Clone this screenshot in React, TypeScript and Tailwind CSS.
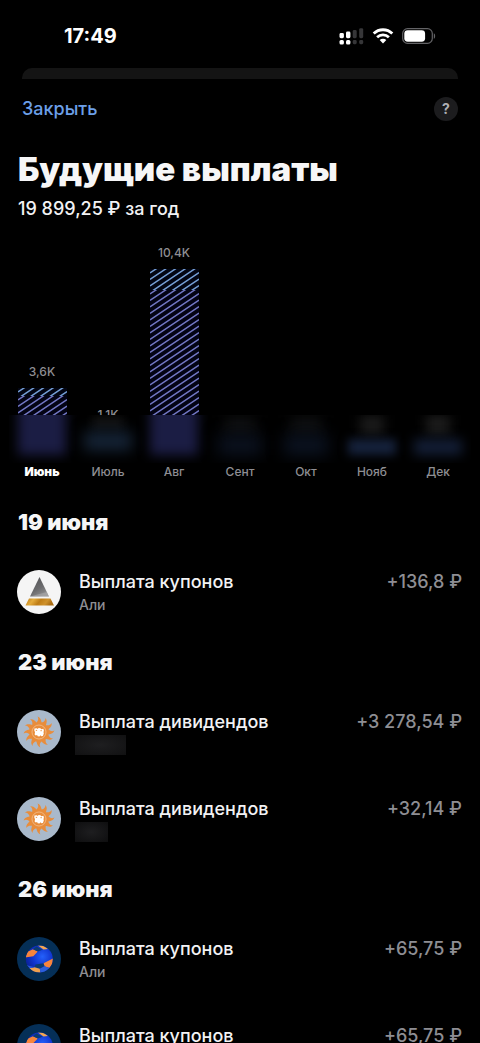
import React from "react";

type Logo = "almaz" | "sun" | "ball";

type Payout = {
  title: string;
  note?: string;
  hiddenNote?: "wide" | "narrow";
  amount: string;
  logo: Logo;
};

type Day = { date: string; payouts: Payout[] };

const days: Day[] = [
  {
    date: "19 июня",
    payouts: [{ title: "Выплата купонов", note: "Али", amount: "+136,8 ₽", logo: "almaz" }],
  },
  {
    date: "23 июня",
    payouts: [
      { title: "Выплата дивидендов", hiddenNote: "wide", amount: "+3 278,54 ₽", logo: "sun" },
      { title: "Выплата дивидендов", hiddenNote: "narrow", amount: "+32,14 ₽", logo: "sun" },
    ],
  },
  {
    date: "26 июня",
    payouts: [
      { title: "Выплата купонов", note: "Али", amount: "+65,75 ₽", logo: "ball" },
      { title: "Выплата купонов", note: "Али", amount: "+65,75 ₽", logo: "ball" },
    ],
  },
];

type Month = { name: string; value?: string; total: number; top: number; current?: boolean };

const months: Month[] = [
  { name: "Июнь", value: "3,6K", total: 75, top: 8, current: true },
  { name: "Июль", value: "1,1K", total: 32, top: 0 },
  { name: "Авг", value: "10,4K", total: 194, top: 21 },
  { name: "Сент", total: 0, top: 0 },
  { name: "Окт", total: 0, top: 0 },
  { name: "Нояб", total: 0, top: 0 },
  { name: "Дек", total: 0, top: 0 },
];

function SignalIcon() {
  return (
    <svg width="25" height="17" viewBox="0 0 25 17" aria-hidden="true">
      <g fill="#fff">
        <rect x="0.5" y="5" width="4.4" height="5.2" rx="1.4" />
        <rect x="7" y="3.6" width="4.4" height="6.6" rx="1.4" />
        <rect x="0.5" y="12" width="4.4" height="4.4" rx="1.5" />
        <rect x="7" y="12" width="4.4" height="4.4" rx="1.5" />
      </g>
      <g fill="#363638">
        <rect x="13.7" y="2" width="4" height="8.2" rx="1.4" />
        <rect x="20.2" y="0.2" width="4" height="10" rx="1.4" />
        <rect x="13.7" y="12" width="4" height="4.2" rx="1.4" />
        <rect x="20.2" y="12" width="4" height="4.2" rx="1.4" />
      </g>
    </svg>
  );
}

function WifiIcon() {
  return (
    <svg width="22" height="16" viewBox="0 0 22 16" fill="none" aria-hidden="true">
      <path d="M1.7 5.6a13.2 13.2 0 0 1 18.6 0" stroke="#fff" strokeWidth="2.8" />
      <path d="M5.1 9.2a8.4 8.4 0 0 1 11.8 0" stroke="#fff" strokeWidth="2.7" />
      <path d="M11 15.4 7.7 12a4.7 4.7 0 0 1 6.6 0Z" fill="#fff" />
    </svg>
  );
}

function BatteryIcon() {
  return (
    <svg width="34" height="16" viewBox="0 0 34 16" aria-hidden="true">
      <rect x="0.7" y="0.7" width="29.6" height="14.6" rx="4.8" fill="none" stroke="#636366" strokeWidth="1.2" />
      <rect x="2.3" y="2.3" width="20.8" height="11.4" rx="3.4" fill="#fff" />
      <path d="M31.8 5.2c1.8.7 1.8 4.9 0 5.6Z" fill="#636366" />
    </svg>
  );
}

function AlmazLogo() {
  return (
    <svg viewBox="0 0 44 44" className="size-11 shrink-0" aria-hidden="true">
      <defs>
        <linearGradient id="steel" x1="0" y1="0" x2="0.6" y2="1">
          <stop offset="0" stopColor="#505052" />
          <stop offset="0.65" stopColor="#6c6c6e" />
          <stop offset="1" stopColor="#8e8e90" />
        </linearGradient>
        <linearGradient id="gold" x1="0" y1="0" x2="1" y2="0.2">
          <stop offset="0" stopColor="#b67b1a" />
          <stop offset="0.3" stopColor="#e5ac3c" />
          <stop offset="0.55" stopColor="#bf7d16" />
          <stop offset="0.8" stopColor="#cf922c" />
          <stop offset="1" stopColor="#aa6c12" />
        </linearGradient>
      </defs>
      <circle cx="22" cy="22" r="22" fill="#f5f5f5" />
      <path d="M22.5 7 32 26.5H13Z" fill="url(#steel)" />
      <path d="M13 26.5 29.8 22 32 26.5Z" fill="#bdbdbd" opacity="0.4" />
      <path d="M12 28.5h21.5l3.5 7H8.5Z" fill="url(#gold)" />
    </svg>
  );
}

const rays = Array.from({ length: 12 }, (_, i) => i * 30);

function SunLogo() {
  return (
    <svg viewBox="0 0 44 44" className="size-11 shrink-0" aria-hidden="true">
      <circle cx="22" cy="22" r="22" fill="#a9b9cb" />
      <g fill="#e88d3c">
        {rays.map((angle) => (
          <path
            key={angle}
            d="M18.6 14.6C19.4 11.8 22.6 10.6 20.6 6.6C25.2 8.6 23.2 12.2 26 14.2Z"
            transform={`rotate(${angle} 22 22)`}
          />
        ))}
        <circle cx="22" cy="22" r="9" />
      </g>
      <circle cx="22" cy="22" r="7" fill="none" stroke="#f2bf8f" strokeWidth="0.8" />
      <path
        d="M17.4 18.6l2.4-.4.6.8 1.3-.9 1.7.2 1 .9 1.9-.5.6 1.6-.4 2 .3 1.3-.9 2.4-1.6.2-.6-1-1.3 1.3-1.7-.3-.6-1.2-1.3.6-1.2-1.1.4-2.2-.7-1.7Z"
        fill="#fff"
      />
      <path d="M18.8 20.4h1.3M23.4 20.7h1.5" stroke="#e88d3c" strokeWidth="0.9" />
    </svg>
  );
}

function BallLogo() {
  return (
    <svg viewBox="0 0 44 44" className="size-11 shrink-0" aria-hidden="true">
      <defs>
        <radialGradient id="ballBlue" cx="0.6" cy="0.4" r="0.6">
          <stop offset="0" stopColor="#2461fb" />
          <stop offset="0.55" stopColor="#1136d0" />
          <stop offset="1" stopColor="#0b219a" />
        </radialGradient>
        <clipPath id="ballShape">
          <circle cx="22.3" cy="22" r="13.5" />
        </clipPath>
      </defs>
      <circle cx="22" cy="22" r="22" fill="#052f57" />
      <g clipPath="url(#ballShape)">
        <rect x="8" y="8" width="29" height="29" fill="url(#ballBlue)" />
        <path d="M8 20.5 11 14.5 16 12.2 20.8 14.6 16.3 19.2Z" fill="#f8843b" />
        <path d="M16 12.2 19.5 9.5 25.5 12.8 20.8 14.6Z" fill="#0c3b70" />
        <path d="M20.5 8.2 26 8.5 31 12 26.5 12.6Z" fill="#f3a650" />
        <path d="M26.5 26.2 36 21.5 35.5 27 32.5 31 27.5 29.2Z" fill="#f8843b" />
        <path d="M18.5 27.5 26.5 26.2 27.5 29.2 22.8 31.8 17.5 30.2Z" fill="#0c3b70" />
        <path d="M12 31.2 17.5 30.2 22.8 31.8 23.5 35.8 17 35.5Z" fill="#efa04e" />
        <path d="M9 27.5C13 29.5 15 29.5 17.5 30.2L12 31.5Z" fill="#2858d8" />
        <path d="M27.5 29.2 32.5 31 28 35 23.5 35.8 22.8 31.8Z" fill="#2c5fdc" />
      </g>
    </svg>
  );
}

const logos: Record<Logo, () => React.JSX.Element> = {
  almaz: AlmazLogo,
  sun: SunLogo,
  ball: BallLogo,
};

const stripePitch = 6.5;
const barWidth = 49;
const stripeRise = 33;

function stripes(height: number) {
  const count = Math.ceil((height + stripeRise) / stripePitch);
  return Array.from({ length: count }, (_, i) => {
    const y = 4 + i * stripePitch;
    return `M0 ${y}L${barWidth} ${y - stripeRise}`;
  }).join("");
}

function HatchedBar({ total, top }: { total: number; top: number }) {
  return (
    <div className="w-[49px]" aria-hidden="true">
      <svg width={barWidth} height={top} className="block overflow-hidden">
        <rect width={barWidth} height={top} fill="#020513" />
        <path d={stripes(top)} stroke="#759fd6" strokeWidth="1.5" />
      </svg>
      <svg width={barWidth} height={total - top} className="block overflow-hidden">
        <rect width={barWidth} height={total - top} fill="#030314" />
        <path d={stripes(total - top)} stroke="#7277c4" strokeWidth="1.5" />
      </svg>
    </div>
  );
}

function Veil() {
  return (
    <div className="absolute inset-x-0 bottom-0 h-12 overflow-hidden bg-black" aria-hidden="true">
      <div className="grid h-full grid-cols-7">
        <div className="flex justify-center">
          <div className="-mt-4 h-14 w-12 bg-[#1b1d44] blur-[6px]" />
        </div>
        <div className="flex flex-col items-center">
          <div className="h-4 w-8 bg-[#101010] blur-[5px]" />
          <div className="h-5 w-12 bg-[#142234] blur-[7px]" />
        </div>
        <div className="flex justify-center">
          <div className="-mt-4 h-14 w-12 bg-[#1b1d44] blur-[6px]" />
        </div>
        <div className="flex flex-col items-center">
          <div className="h-5 w-8 bg-[#0e0f10] blur-[7px]" />
          <div className="h-5 w-11 bg-[#0b1220] blur-[8px]" />
        </div>
        <div className="flex flex-col items-center">
          <div className="h-5 w-8 bg-[#0e0f10] blur-[7px]" />
          <div className="h-5 w-11 bg-[#0b1322] blur-[8px]" />
        </div>
        <div className="flex flex-col items-center">
          <div className="mb-1 h-5 w-6 bg-[#1a1a1a] blur-[6px]" />
          <div className="h-4 w-12 bg-[#15213b] blur-[5px]" />
        </div>
        <div className="flex flex-col items-center">
          <div className="mb-1 h-5 w-6 bg-[#1c1c1c] blur-[6px]" />
          <div className="h-4 w-12 bg-[#131e36] blur-[6px]" />
        </div>
      </div>
    </div>
  );
}

function Chart() {
  return (
    <figure className="px-[9px] pt-5">
      <div className="relative">
        <div className="grid h-[222px] grid-cols-7 items-end">
          {months.map((month) => (
            <div key={month.name} className="flex flex-col items-center gap-2">
              {month.value && (
                <span className="text-xs leading-4 font-medium text-[#8e8e93]">{month.value}</span>
              )}
              {month.total > 0 && <HatchedBar total={month.total} top={month.top} />}
            </div>
          ))}
        </div>
        <Veil />
      </div>
      <figcaption className="grid grid-cols-7 text-center text-xs leading-[18px]">
        {months.map((month) => (
          <span key={month.name} className={month.current ? "font-black text-white" : "font-medium text-[#8e8e93]"}>
            {month.name}
          </span>
        ))}
      </figcaption>
    </figure>
  );
}

function PayoutRow({ payout }: { payout: Payout }) {
  const LogoImage = logos[payout.logo];
  return (
    <li className="flex h-[87px] items-center gap-[18px]">
      <LogoImage />
      <div className="flex h-[46px] min-w-0 flex-1 flex-col">
        <div className="flex justify-between text-lg leading-[26px] font-medium">
          <span className="text-[#f2f2f4]">{payout.title}</span>
          <span className="text-[#8e8e93]">{payout.amount}</span>
        </div>
        {payout.note && <span className="text-sm leading-5 font-medium text-[#8e8e93]">{payout.note}</span>}
        {payout.hiddenNote === "wide" && (
          <span className="-ml-1 h-5 w-[51px] shrink-0 bg-[radial-gradient(ellipse,#1e1e20,#111112)]" />
        )}
        {payout.hiddenNote === "narrow" && (
          <span className="-ml-1 h-5 w-[33px] shrink-0 bg-[radial-gradient(ellipse,#1e1e20,#0e0e0f)]" />
        )}
      </div>
    </li>
  );
}

export default function App() {
  return (
    <div className="h-screen overflow-hidden bg-black font-['Inter',sans-serif] text-white">
      <div className="flex h-[68px] items-center justify-between pt-1 pr-11 pl-16">
        <time className="text-xl leading-6 font-bold">17:49</time>
        <div className="flex items-center gap-2">
          <SignalIcon />
          <WifiIcon />
          <BatteryIcon />
        </div>
      </div>
      <div className="mx-[22px] h-[11px] rounded-t-[10px] bg-[#141414]" />

      <header className="flex h-[60px] items-center justify-between px-[22px]">
        <button type="button" className="text-lg leading-6 font-medium text-[#6c9fe8]">
          Закрыть
        </button>
        <button
          type="button"
          aria-label="Справка"
          className="flex size-6 items-center justify-center rounded-full bg-[#1c1c1e] text-sm font-bold text-[#b0b0b4]"
        >
          ?
        </button>
      </header>

      <main>
        <div className="px-[18px] pt-2">
          <h1 className="text-[33px] leading-[44px] font-black text-[#f6f6f7]">Будущие выплаты</h1>
          <p className="pt-1.5 text-lg leading-6 font-medium text-[#f2f2f4]">19 899,25 ₽ за год</p>
        </div>
        <Chart />
        <div className="px-[18px] pt-3.5">
          {days.map((day) => (
            <section key={day.date}>
              <h2 className="flex h-[53px] items-center text-[22px] leading-7 font-black text-[#f6f6f7]">
                {day.date}
              </h2>
              <ul className="-ml-px">
                {day.payouts.map((payout, i) => (
                  <PayoutRow key={i} payout={payout} />
                ))}
              </ul>
            </section>
          ))}
        </div>
      </main>
    </div>
  );
}
